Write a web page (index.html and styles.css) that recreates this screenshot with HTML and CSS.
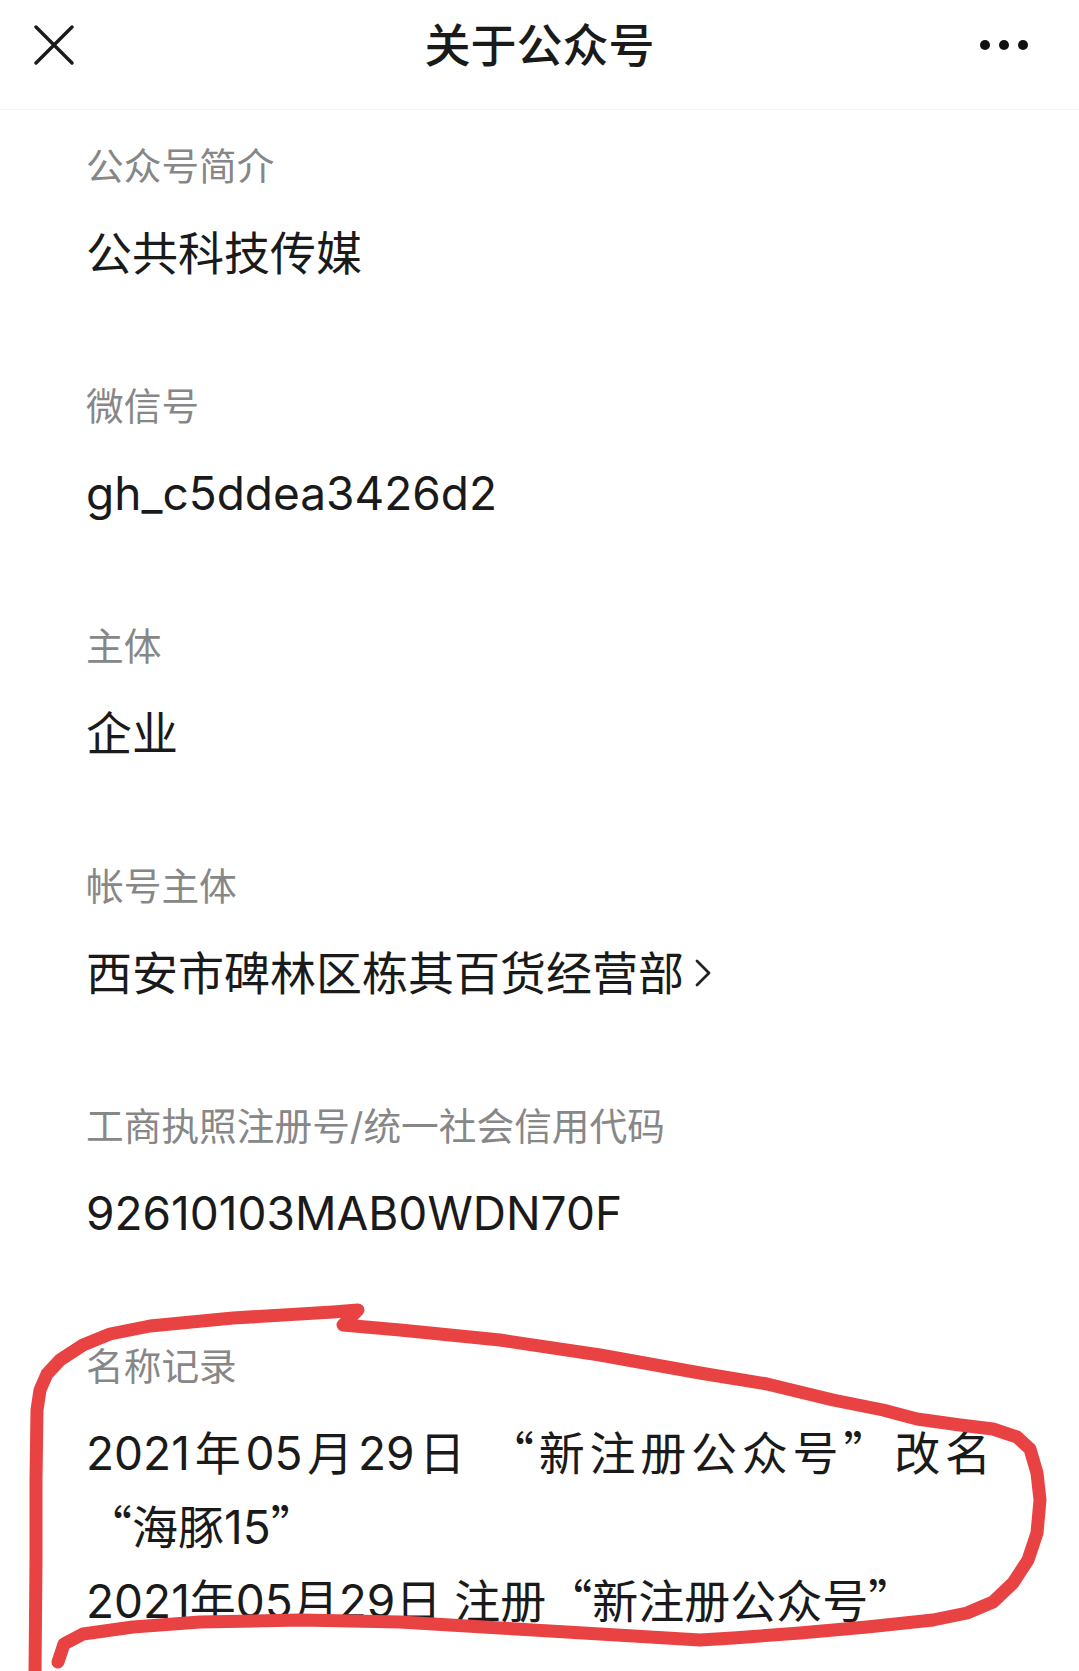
FILE: index.html
```html
<!DOCTYPE html>
<html lang="zh-CN">
<head>
<meta charset="utf-8">
<title>关于公众号</title>
<link rel="stylesheet" href="styles.css">
</head>
<body>
<div class="page">
  <header class="topbar">
    <div class="topbar-left">
      <svg class="icon-close" width="40" height="40" viewBox="0 0 40 40">
        <path d="M2 2 L38 38 M38 2 L2 38" stroke="#1b1b1b" stroke-width="3.4" stroke-linecap="round" fill="none"/>
      </svg>
    </div>
    <h1 class="topbar-title">关于公众号</h1>
    <div class="topbar-right">
      <svg class="icon-more" width="50" height="12" viewBox="0 0 50 12">
        <circle cx="5" cy="6" r="5" fill="#111"/>
        <circle cx="24" cy="6" r="5" fill="#111"/>
        <circle cx="43" cy="6" r="5" fill="#111"/>
      </svg>
    </div>
  </header>

  <main class="content">
    <section class="item">
      <div class="label">公众号简介</div>
      <div class="value">公共科技传媒</div>
    </section>
    <section class="item">
      <div class="label">微信号</div>
      <div class="value">gh_c5ddea3426d2</div>
    </section>
    <section class="item">
      <div class="label">主体</div>
      <div class="value">企业</div>
    </section>
    <section class="item">
      <div class="label">帐号主体</div>
      <div class="value value-link">西安市碑林区栋其百货经营部<svg class="chev" width="18" height="28" viewBox="0 0 18 28"><path d="M3 2 L15 14 L3 26" stroke="#222" stroke-width="2.8" fill="none" stroke-linecap="round" stroke-linejoin="round"/></svg></div>
    </section>
    <section class="item">
      <div class="label">工商执照注册号/统一社会信用代码</div>
      <div class="value">92610103MAB0WDN70F</div>
    </section>
    <section class="item item-last">
      <div class="label">名称记录</div>
      <div class="records">
        <p class="record">2021年05月29日 <span class="q">“</span>新注册公众号<span class="q">”</span>改名<span class="nw"><span class="q">“</span>海豚15<span class="q">”</span></span></p>
        <p class="record">2021年05月29日 注册<span class="q">“</span>新注册公众号<span class="q">”</span></p>
      </div>
    </section>
  </main>

  <svg class="scribble" width="1079" height="1671" viewBox="0 0 1079 1671">
    <path d="M35 1675 L36 1560 L36 1480 L37 1410 L40 1390 L47 1374 L60 1360 L83 1345 L110 1334 L150 1326 L233 1318 L333 1312 L358 1310 L350 1318 L343 1325 L400 1330 L500 1340 L600 1355 L700 1373 L767 1384 L833 1400 L883 1410 L917 1419 L960 1425 L993 1429 L1017 1437 L1030 1449 L1037 1473 L1040 1500 L1037 1533 L1028 1560 L1013 1583 L993 1602 L967 1613 L933 1620 L867 1627 L800 1633 L733 1638 L700 1640 L600 1634 L500 1628 L400 1622 L300 1620 L200 1622 L133 1627 L83 1634 L64 1644 L58 1662" stroke="#e94242" stroke-width="13" fill="none" stroke-linecap="round" stroke-linejoin="round"/>
  </svg>
</div>
</body>
</html>
```

FILE: styles.css
```css
html, body {
  margin: 0;
  padding: 0;
  background: #ffffff;
}

.page {
  position: relative;
  width: 1079px;
  min-height: 1671px;
  overflow: hidden;
  font-family: Inter, "Noto Sans CJK SC", sans-serif;
  color: #1a1a1a;
}

.topbar {
  display: grid;
  grid-template-columns: 1fr auto 1fr;
  align-items: center;
  height: 90px;
  padding-bottom: 19px;
  border-bottom: 1px solid #f4f4f4;
}

.topbar-left {
  padding-left: 34px;
  display: flex;
  align-items: center;
}

.topbar-right {
  display: flex;
  justify-content: flex-end;
  align-items: center;
  padding-right: 49px;
}

.icon-close,
.icon-more {
  display: block;
}

.topbar-title {
  margin: 0 0 6px 0;
  font-family: "Noto Sans CJK SC", sans-serif;
  font-size: 46px;
  font-weight: 500;
  line-height: 84px;
  color: #1a1a1a;
}

.content {
  padding: 30px 88px 0 86px;
}

.item {
  margin-bottom: 90px;
}

.label {
  font-size: 37.7px;
  line-height: 52px;
  color: #878787;
  margin-bottom: 24px;
}

.value {
  font-size: 46px;
  line-height: 74px;
  color: #1a1a1a;
}

.value-link {
  display: flex;
  align-items: center;
}

.chev {
  display: block;
  margin-left: 10px;
}

.records {
  font-size: 46px;
  line-height: 74px;
  color: #1a1a1a;
}

.record {
  margin: 0;
  text-align: justify;
}

.q {
  font-family: "Noto Sans CJK SC", sans-serif;
  font-feature-settings: "fwid" 1;
  line-height: 1;
}

.nw {
  white-space: nowrap;
}

.scribble {
  position: absolute;
  left: 0;
  top: 0;
  pointer-events: none;
}
```
